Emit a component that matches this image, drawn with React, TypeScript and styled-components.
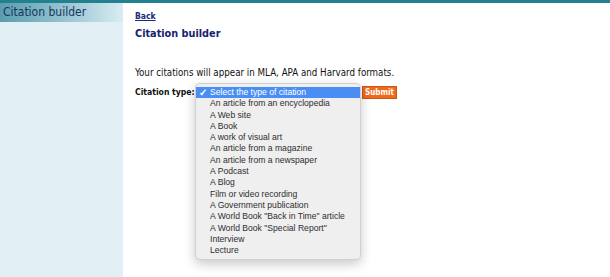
import styled, { createGlobalStyle } from "styled-components";

const GlobalStyle = createGlobalStyle`
  html, body {
    margin: 0;
    padding: 0;
    background: #fff;
  }
`;

const Page = styled.div`
  display: grid;
  grid-template-columns: 123px 1fr;
  min-height: 274px;
  border-top: 3px solid #22808f;
  font-family: "DejaVu Sans Condensed", "DejaVu Sans", Verdana, sans-serif;
`;

const Sidebar = styled.aside`
  background: #e2f0f6;
`;

const SidebarTitle = styled.div`
  height: 19px;
  padding-left: 3px;
  background: linear-gradient(to right, #5a9daf 0%, #99c6d3 55%, #d9ecf2 100%);
  color: #15365f;
  font-size: 12px;
  line-height: 19px;
`;

const Main = styled.main`
  padding: 8px 12px;
  color: #111;
`;

const BackLink = styled.a`
  display: block;
  color: #1a2a78;
  font-size: 8.5px;
  font-weight: bold;
  line-height: 11px;
  text-decoration: underline;
`;

const Heading = styled.h1`
  margin: 5px 0 0;
  color: #14236e;
  font-size: 10.8px;
  font-weight: bold;
  line-height: 14px;
`;

const Intro = styled.p`
  margin: 26px 0 0;
  font-size: 9.7px;
  line-height: 12px;
`;

const FormRow = styled.form`
  display: flex;
  align-items: center;
  margin-top: 7px;
  height: 13px;
`;

const Label = styled.label`
  width: 60px;
  font-size: 8.6px;
  font-weight: bold;
  line-height: 13px;
  white-space: nowrap;
`;

const SelectSlot = styled.div`
  position: relative;
  width: 166px;
  height: 13px;
`;

const Menu = styled.ul`
  position: absolute;
  top: -3px;
  left: 0;
  width: 166px;
  margin: 0;
  padding: 3px 0;
  list-style: none;
  background: #efefef;
  border: 1px solid rgba(0, 0, 0, 0.13);
  border-radius: 5px;
  box-sizing: border-box;
  box-shadow: 0 4px 12px rgba(0, 0, 0, 0.22);
  font-family: "Liberation Sans", Arial, sans-serif;
  z-index: 2;
`;

const Option = styled.li<{ $selected?: boolean }>`
  position: relative;
  height: 11.3px;
  padding-left: 14px;
  background: ${(p) => (p.$selected ? "#4b8ef3" : "transparent")};
  color: ${(p) => (p.$selected ? "#fff" : "#2e2e2e")};
  font-size: 8.6px;
  line-height: 11.3px;
  white-space: nowrap;
`;

const Check = styled.span`
  position: absolute;
  left: 3px;
  top: 0;
  font-size: 10px;
  font-weight: bold;
`;

const SubmitButton = styled.button`
  height: 13px;
  margin: 0 0 0 1px;
  padding: 0 2px;
  border: 1px solid #c95812;
  background: #f06a1c;
  color: #fff;
  font-family: inherit;
  font-size: 8px;
  font-weight: bold;
  line-height: 11px;
`;

const options = [
  "Select the type of citation",
  "An article from an encyclopedia",
  "A Web site",
  "A Book",
  "A work of visual art",
  "An article from a magazine",
  "An article from a newspaper",
  "A Podcast",
  "A Blog",
  "Film or video recording",
  "A Government publication",
  'A World Book "Back in Time" article',
  'A World Book "Special Report"',
  "Interview",
  "Lecture",
];

export default function App() {
  return (
    <>
      <GlobalStyle />
      <Page>
        <Sidebar>
          <SidebarTitle>Citation builder</SidebarTitle>
        </Sidebar>
        <Main>
          <BackLink href="#">Back</BackLink>
          <Heading>Citation builder</Heading>
          <Intro>Your citations will appear in MLA, APA and Harvard formats.</Intro>
          <FormRow onSubmit={(e) => e.preventDefault()}>
            <Label>Citation type:</Label>
            <SelectSlot>
              <Menu>
                {options.map((o, i) => (
                  <Option key={o} $selected={i === 0}>
                    {i === 0 && <Check>✓</Check>}
                    {o}
                  </Option>
                ))}
              </Menu>
            </SelectSlot>
            <SubmitButton type="submit">Submit</SubmitButton>
          </FormRow>
        </Main>
      </Page>
    </>
  );
}
